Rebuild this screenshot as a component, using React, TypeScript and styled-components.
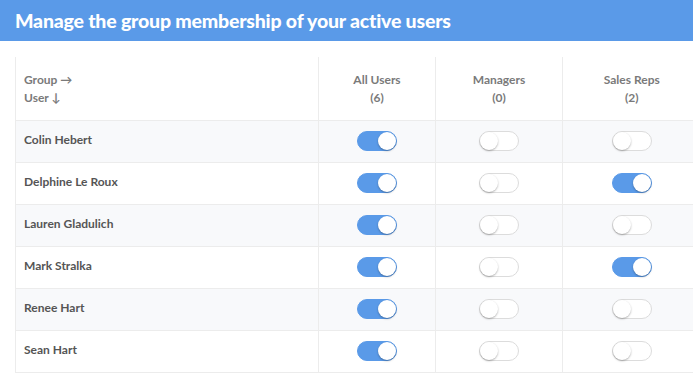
import React from "react";
import styled, { createGlobalStyle } from "styled-components";

const GlobalStyle = createGlobalStyle`
  html, body { margin: 0; padding: 0; background: #ffffff; }
  body { font-family: "Lato", "Open Sans", sans-serif; overflow: hidden; }
`;

const Page = styled.div`
  width: 693px;
  height: 376px;
  overflow: hidden;
  background: #ffffff;
`;

const Banner = styled.header`
  height: 41px;
  background: #5a9ae8;
  display: flex;
  align-items: center;
  padding-left: 15px;
`;

const Title = styled.h1`
  margin: 0;
  color: #ffffff;
  font-family: "Lato", sans-serif;
  font-weight: 900;
  font-size: 19.5px;
  letter-spacing: -0.2px;
`;

const Body = styled.div`
  padding: 16px 0 0 15px;
`;

const Table = styled.table`
  border-collapse: collapse;
  table-layout: fixed;
  width: 685px;
`;

const Col = styled.col<{ $w: number }>`
  width: ${(p) => p.$w}px;
`;

const HeadCell = styled.th<{ $align?: "left" | "center" }>`
  height: 63px;
  padding: 0 8px;
  text-align: ${(p) => p.$align ?? "center"};
  font-size: 12px;
  line-height: 18px;
  font-weight: 700;
  color: #7a7a7a;
  border-left: 1px solid #ececec;
  border-bottom: 1px solid #ececec;
  vertical-align: middle;
`;

const Row = styled.tr<{ $shade: boolean }>`
  background: ${(p) => (p.$shade ? "#f8f9fb" : "#ffffff")};
`;

const NameCell = styled.td`
  height: 42px;
  box-sizing: border-box;
  padding: 0 8px 4px;
  font-size: 12px;
  font-weight: 700;
  color: #555555;
  border-left: 1px solid #ececec;
  border-bottom: 1px solid #ececec;
`;

const ToggleCell = styled.td`
  height: 42px;
  box-sizing: border-box;
  padding: 0 0 3px;
  text-align: center;
  border-left: 1px solid #ececec;
  border-bottom: 1px solid #ececec;
`;

const Switch = styled.span<{ $on: boolean }>`
  position: relative;
  display: inline-block;
  vertical-align: middle;
  box-sizing: border-box;
  width: 40px;
  height: 20px;
  border-radius: 10px;
  background: ${(p) => (p.$on ? "#5a9ae8" : "#ffffff")};
  border: 1px solid ${(p) => (p.$on ? "#5a9ae8" : "#dcdcdc")};
  &::after {
    content: "";
    position: absolute;
    top: 0;
    left: ${(p) => (p.$on ? "20px" : "0")};
    width: 18px;
    height: 18px;
    border-radius: 50%;
    background: #ffffff;
    box-shadow: 0 1px 2px rgba(0, 0, 0, 0.3);
  }
`;

const groups = [
  { name: "All Users", count: 6, w: 117 },
  { name: "Managers", count: 0, w: 127 },
  { name: "Sales Reps", count: 2, w: 138 },
];

const users: { name: string; m: boolean[] }[] = [
  { name: "Colin Hebert", m: [true, false, false] },
  { name: "Delphine Le Roux", m: [true, false, true] },
  { name: "Lauren Gladulich", m: [true, false, false] },
  { name: "Mark Stralka", m: [true, false, true] },
  { name: "Renee Hart", m: [true, false, false] },
  { name: "Sean Hart", m: [true, false, false] },
];

export default function App() {
  return (
    <Page>
      <GlobalStyle />
      <Banner>
        <Title>Manage the group membership of your active users</Title>
      </Banner>
      <Body>
        <Table>
          <colgroup>
            <Col $w={303} />
            {groups.map((g) => (
              <Col key={g.name} $w={g.w} />
            ))}
          </colgroup>
          <thead>
            <tr>
              <HeadCell $align="left">
                Group →<br />
                User ↓
              </HeadCell>
              {groups.map((g) => (
                <HeadCell key={g.name}>
                  {g.name}
                  <br />({g.count})
                </HeadCell>
              ))}
            </tr>
          </thead>
          <tbody>
            {users.map((u, i) => (
              <Row key={u.name} $shade={i % 2 === 0}>
                <NameCell>{u.name}</NameCell>
                {u.m.map((on, j) => (
                  <ToggleCell key={j}>
                    <Switch $on={on} />
                  </ToggleCell>
                ))}
              </Row>
            ))}
          </tbody>
        </Table>
      </Body>
    </Page>
  );
}
